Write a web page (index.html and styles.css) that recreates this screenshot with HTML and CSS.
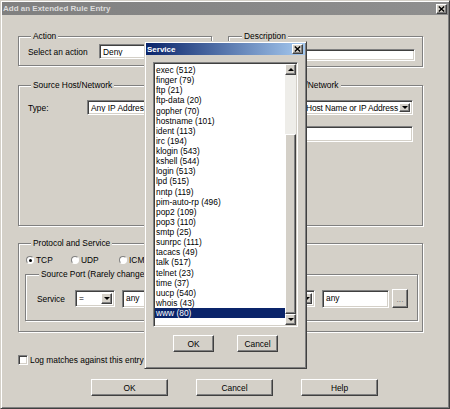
FILE: index.html
```html
<!DOCTYPE html>
<html>
	<head>
		<title>Add an Extended Rule Entry</title>
		<link rel="stylesheet" href="styles.css">
	</head>

	<body>
		<div class="window">
			<div class="titlebar inactive">
				<span>Add an Extended Rule Entry</span>
				<span class="tbtn"><svg width="7" height="6" viewBox="0 0 7 6"><path d="M0.8 0.5 L6.2 5.5 M6.2 0.5 L0.8 5.5" stroke="#000" stroke-width="1.4"/></svg></span>
			</div>

			<div class="content">
				<div class="row">
					<fieldset class="group action">
						<legend>Action</legend>
						<div class="line">
							<span class="lbl lbl-action">Select an action</span>
							<div class="select sel-action"><span class="val">Deny</span><span class="arrow"></span></div>
						</div>
					</fieldset>
					<fieldset class="group description">
						<legend>Description</legend>
						<div class="input inp-desc"></div>
					</fieldset>
				</div>

				<div class="row hosts">
					<fieldset class="group host src">
						<legend>Source Host/Network</legend>
						<div class="host-body">
							<div class="line">
								<span class="lbl lbl-type">Type:</span>
								<div class="select sel-host"><span class="val">Any IP Address</span><span class="arrow"></span></div>
							</div>
						</div>
					</fieldset>
					<fieldset class="group host dst">
						<legend>Destination Host/Network</legend>
						<div class="host-body">
							<div class="line">
								<span class="lbl lbl-type">Type:</span>
								<div class="select sel-host"><span class="val">Host Name or IP Address</span><span class="arrow"></span></div>
							</div>
							<div class="line second">
								<span class="lbl lbl-type"></span>
								<div class="input inp-host"></div>
							</div>
						</div>
					</fieldset>
				</div>

				<fieldset class="group protocol">
					<legend>Protocol and Service</legend>
					<div class="radios">
						<span class="opt opt-tcp"><span class="radio checked"></span>TCP</span>
						<span class="opt opt-udp"><span class="radio"></span>UDP</span>
						<span class="opt"><span class="radio"></span>ICMP</span>
					</div>
					<div class="ports">
						<fieldset class="group port">
							<legend>Source Port (Rarely changed)</legend>
							<div class="line">
								<span class="lbl lbl-service">Service</span>
								<div class="select sel-op"><span class="val">=</span><span class="arrow"></span></div>
								<div class="input inp-port">any</div>
								<div class="btn dots">...</div>
							</div>
						</fieldset>
						<fieldset class="group port">
							<legend>Destination Port</legend>
							<div class="line">
								<span class="lbl lbl-service">Service</span>
								<div class="select sel-op"><span class="val">=</span><span class="arrow"></span></div>
								<div class="input inp-port">any</div>
								<div class="btn dots">...</div>
							</div>
						</fieldset>
					</div>
				</fieldset>

				<div class="check"><span class="checkbox"></span>Log matches against this entry</div>

				<div class="buttons">
					<div class="btn wide">OK</div>
					<div class="btn wide">Cancel</div>
					<div class="btn wide">Help</div>
				</div>
			</div>
		</div>

		<div class="dialog">
			<div class="titlebar active">
				<span>Service</span>
				<span class="tbtn"><svg width="7" height="6" viewBox="0 0 7 6"><path d="M0.8 0.5 L6.2 5.5 M6.2 0.5 L0.8 5.5" stroke="#000" stroke-width="1.4"/></svg></span>
			</div>
			<div class="listbox">
				<div class="items">
					<div class="item">exec (512)</div>
					<div class="item">finger (79)</div>
					<div class="item">ftp (21)</div>
					<div class="item">ftp-data (20)</div>
					<div class="item">gopher (70)</div>
					<div class="item">hostname (101)</div>
					<div class="item">ident (113)</div>
					<div class="item">irc (194)</div>
					<div class="item">klogin (543)</div>
					<div class="item">kshell (544)</div>
					<div class="item">login (513)</div>
					<div class="item">lpd (515)</div>
					<div class="item">nntp (119)</div>
					<div class="item">pim-auto-rp (496)</div>
					<div class="item">pop2 (109)</div>
					<div class="item">pop3 (110)</div>
					<div class="item">smtp (25)</div>
					<div class="item">sunrpc (111)</div>
					<div class="item">tacacs (49)</div>
					<div class="item">talk (517)</div>
					<div class="item">telnet (23)</div>
					<div class="item">time (37)</div>
					<div class="item">uucp (540)</div>
					<div class="item">whois (43)</div>
					<div class="item selected">www (80)</div>
				</div>
				<div class="vscroll">
					<div class="sbtn up"></div>
					<div class="track"></div>
					<div class="thumb"></div>
					<div class="sbtn down"></div>
				</div>
			</div>
			<div class="dlg-buttons">
				<div class="btn small">OK</div>
				<div class="btn small">Cancel</div>
			</div>
		</div>
	</body>
</html>
```

FILE: styles.css
```css
* {
	box-sizing: border-box;
}

html, body {
	margin: 0px;
	padding: 0px;
}

body {
	position: relative;
	width: 450px;
	height: 409px;
	overflow: hidden;
	font-family: "Liberation Sans", Arial, sans-serif;
	font-size: 8.4px;
	color: #000;
	background: #d4d0c8;
}

/* raised 3d frame, used by windows, buttons, scroll parts */
.window, .dialog, .btn, .tbtn, .arrow, .sbtn, .thumb {
	background: #d4d0c8;
	border: 1px solid;
	border-color: #d4d0c8 #404040 #404040 #d4d0c8;
	box-shadow: inset 1px 1px #fff, inset -1px -1px #808080;
}

.btn, .tbtn, .arrow, .sbtn, .thumb {
	border-color: #fff #404040 #404040 #fff;
	box-shadow: inset -1px -1px #808080;
}

/* sunken frame */
.select, .input, .listbox, .checkbox {
	background: #fff;
	border: 1px solid;
	border-color: #808080 #fff #fff #808080;
	box-shadow: inset 1px 1px #404040, inset -1px -1px #d4d0c8;
}

.window {
	width: 450px;
	height: 409px;
	padding: 1px;
}

.titlebar {
	display: flex;
	align-items: center;
	justify-content: space-between;
	height: 13px;
	padding: 0px 1px 0px 1px;
	font-size: 8px;
	font-weight: bold;
}

.titlebar.inactive {
	background: linear-gradient(to right, #808080, #8f8f8f);
	color: #dcdcdc;
}

.titlebar.active {
	height: 12px;
	padding-right: 2px;
	background: linear-gradient(to right, #0a246a, #a6caf0);
	color: #fff;
}

.tbtn {
	display: flex;
	align-items: center;
	justify-content: center;
	width: 11px;
	height: 10px;
}

.content {
	padding: 16px 0px 0px 16px;
}

.row {
	display: flex;
	align-items: flex-start;
	gap: 16px;
}

/* etched group boxes */
fieldset {
	margin: 0px;
	min-width: 0px;
}

.group {
	border: 1px solid #808080;
	box-shadow: inset 1px 1px #fff, 1px 1px #fff;
}

legend {
	padding: 0px 2px;
	line-height: 11px;
	background: #d4d0c8;
}

.line {
	display: flex;
	align-items: center;
}

.lbl {
	flex: none;
}

.action {
	width: 194px;
	padding: 2px 9px 6px 9px;
}

.action legend {
	margin-left: 3px;
}

.lbl-action {
	width: 71px;
}

.description {
	width: 195px;
	padding: 7px 7px 5px 7px;
}

.description legend {
	margin-left: 6px;
}

.hosts {
	margin-top: 13px;
}

.host {
	padding: 9px 9px 0px 9px;
}

.host-body {
	height: 125px;
}

.src {
	width: 194px;
}

.dst {
	width: 195px;
}

.host legend {
	margin-left: 3px;
}

.dst legend {
	margin-left: 4px;
}

.lbl-type {
	width: 59px;
}

.sel-host {
	width: 118px;
}

.dst .lbl-type {
	width: 64px;
}

.dst .sel-host, .inp-host {
	width: 114px;
}

.dst .sel-host .val {
	letter-spacing: -0.1px;
}

.second {
	margin-top: 11px;
}

.protocol {
	width: 405px;
	margin-top: 12px;
	padding: 6px 4px 10px 6px;
}

.protocol > legend {
	margin-left: 6px;
}

.radios {
	display: flex;
	height: 10px;
	align-items: center;
	padding-left: 1px;
}

.opt {
	display: flex;
	align-items: center;
	gap: 2px;
	width: 48px;
}

.opt-tcp {
	width: 45px;
}

.radio {
	width: 8px;
	height: 8px;
	display: flex;
	align-items: center;
	justify-content: center;
	border-radius: 50%;
	background: #fff;
	border: 1px solid;
	border-color: #808080 #fff #fff #808080;
}

.radio.checked::after {
	content: "";
	width: 3px;
	height: 3px;
	border-radius: 50%;
	background: #000;
}

.ports {
	display: flex;
	gap: 7px;
	margin-top: 4px;
}

.port {
	width: 193px;
	padding: 9px 4px 12px 11px;
}

.port legend {
	margin-left: 2px;
}

.lbl-service {
	width: 38px;
}

.select {
	display: flex;
	height: 15px;
	padding: 2px;
}

.select .val {
	flex: 1;
	padding-left: 1px;
	line-height: 11px;
	white-space: nowrap;
	overflow: hidden;
}

.arrow {
	flex: none;
	width: 11px;
	display: flex;
	align-items: center;
	justify-content: center;
}

.arrow::after, .sbtn::after {
	content: "";
	border: 3px solid transparent;
	border-top-color: #000;
	border-bottom-width: 0px;
}

.sel-action {
	width: 100px;
}

.sel-op {
	width: 40px;
	height: 17px;
}

.input {
	height: 16px;
	padding: 2px 3px;
	line-height: 10px;
}

.inp-desc {
	height: 12px;
}

.inp-port {
	width: 67px;
	height: 18px;
	margin-left: 7px;
}

.btn {
	display: flex;
	align-items: center;
	justify-content: center;
	height: 17px;
}

.dots {
	width: 16px;
	height: 19px;
	margin-left: 3px;
	color: #808080;
}

.check {
	display: flex;
	align-items: center;
	gap: 2px;
	height: 10px;
	margin-top: 23px;
}

.checkbox {
	width: 10px;
	height: 10px;
}

.buttons {
	display: flex;
	gap: 28px;
	margin: 14px 0px 0px 73px;
}

.wide {
	width: 77px;
}

/* Service picker, floating over the rule dialog */
.dialog {
	position: absolute;
	left: 144px;
	top: 41px;
	width: 163px;
	height: 328px;
	padding: 1px;
}

.listbox {
	display: flex;
	width: 145px;
	height: 265px;
	margin: 7px 0px 0px 7px;
	padding: 1px;
}

.items {
	flex: 1;
	padding-top: 1px;
	overflow: hidden;
}

.item {
	height: 10.125px;
	line-height: 10px;
	padding-left: 1px;
	white-space: nowrap;
}

.item.selected {
	background: #0a246a;
	color: #fff;
}

.vscroll {
	display: flex;
	flex-direction: column;
	width: 11px;
}

.sbtn {
	flex: none;
	height: 11px;
	display: flex;
	align-items: center;
	justify-content: center;
}

.sbtn.up::after {
	border-top-width: 0px;
	border-bottom: 3px solid #000;
}

.track {
	flex: 1;
	background: #eeede9;
}

.thumb {
	flex: none;
	height: 180px;
}

.dlg-buttons {
	display: flex;
	justify-content: center;
	gap: 23px;
	margin-top: 8px;
}

.small {
	width: 41px;
}
```
